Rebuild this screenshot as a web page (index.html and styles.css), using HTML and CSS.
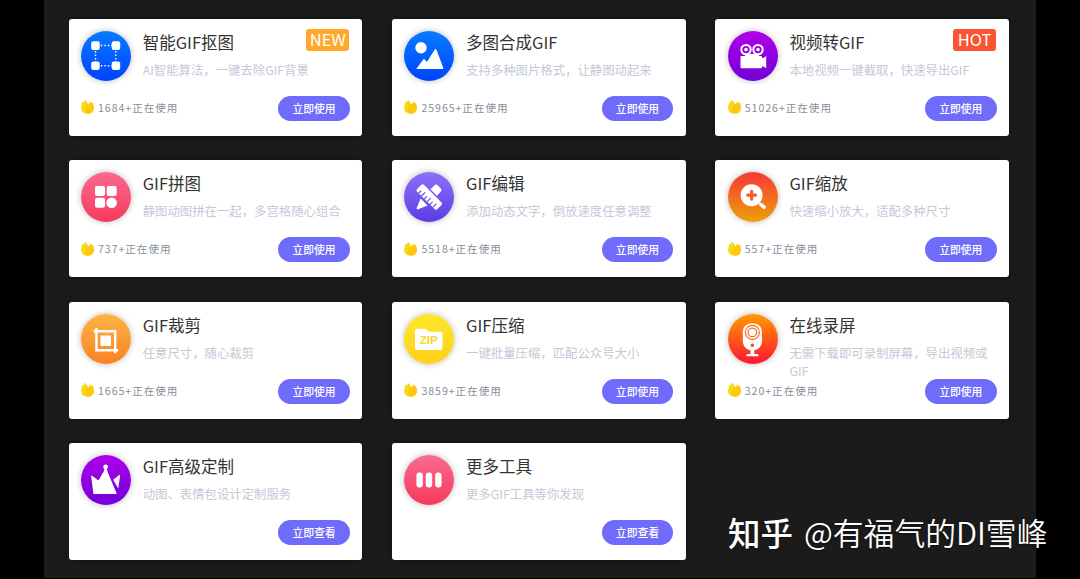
FILE: index.html
```html
<!DOCTYPE html>
<html lang="zh-CN">
<head>
  <meta charset="utf-8">
  <title>GIF工具</title>
  <meta name="viewport" content="width=device-width, initial-scale=1">
  <link rel="stylesheet" href="styles.css">
</head>
<body>
  <!-- Shared flame icon -->
  <svg class="defs">
    <symbol id="flame" viewBox="0 0 13 14">
      <path fill="#f8d916" d="M3.6 0C4.9 0.2 5.6 1.2 6.2 2.2L8 8L6.5 13.4C4.4 14 2.4 13.2 1.2 11.6C-0.2 9.6 -0.2 7 0.6 5C1.1 3.8 1 2.6 1.2 1.8C2 2 2.4 2.2 2.7 2.5C3.3 1.8 3.6 1 3.6 0Z"/>
      <path fill="#fdc80c" d="M9.4 1C9.6 1.8 10 2.4 10.6 3.2C11.2 3.2 11.6 3 12 2.6C12 4 12.8 5.4 13 7.2C13.2 9.6 12.4 11.4 10.8 12.8C8.8 14.3 6.2 14.2 4.6 12.4C3.4 10.8 3.4 8.8 4.4 7C5.2 5.8 5.4 4.6 5.2 3.4C6.2 3.4 6.8 3.8 7.2 4.4C8.2 3.6 9 2.4 9.4 1Z"/>
    </symbol>
  </svg>

  <div class="page">
    <div class="tools">
      <div class="card">
        <div class="head">
          <svg class="icon blue" viewBox="0 0 50 50">
            <g fill="none" stroke="#fff" stroke-width="1.4" stroke-dasharray="1.5 2"><path d="M19.8 14.5H31M19.8 34.7H31M14.5 20V31M34.7 20V31"/></g>
            <g fill="#fff"><rect x="10.2" y="10.2" width="8.5" height="8.7" rx="2"/><rect x="30.7" y="10.2" width="8.5" height="8.7" rx="2"/><rect x="10.2" y="30.4" width="8.5" height="8.7" rx="2"/><rect x="30.7" y="30.4" width="8.5" height="8.7" rx="2"/></g>
          </svg>
          <div class="info">
            <h3>智能GIF抠图</h3>
            <p>AI智能算法，一键去除GIF背景</p>
          </div>
        </div>
        <div class="foot">
          <span class="count"><svg><use href="#flame"/></svg>1684+正在使用</span>
          <a class="btn">立即使用</a>
        </div>
        <span class="badge new">NEW</span>
      </div>

      <div class="card">
        <div class="head">
          <svg class="icon blue" viewBox="0 0 50 50">
            <circle cx="17" cy="16.8" r="5.7" fill="#fff"/>
            <path fill="#fff" d="M12.2 38L19.4 28.3Q20.1 27.5 20.8 28.4L22.9 31L30.8 18.6Q31.7 17.4 32.5 18.7L39.3 37Q39.4 38 38.6 38Z"/>
          </svg>
          <div class="info">
            <h3>多图合成GIF</h3>
            <p>支持多种图片格式，让静图动起来</p>
          </div>
        </div>
        <div class="foot">
          <span class="count"><svg><use href="#flame"/></svg>25965+正在使用</span>
          <a class="btn">立即使用</a>
        </div>
      </div>

      <div class="card">
        <div class="head">
          <svg class="icon purple" viewBox="0 0 50 50">
            <g fill="none" stroke="#fff" stroke-width="2"><circle cx="18" cy="18.6" r="4.7"/><circle cx="30" cy="18.6" r="4.7"/><path d="M17 24H31"/></g>
            <g fill="#fff"><circle cx="18" cy="18.6" r="1.8"/><circle cx="30" cy="18.6" r="1.8"/><rect x="12.5" y="25" width="21.5" height="12.2" rx="1"/><path d="M33 27L35.5 27L38.2 25V37.2L35.5 35.4H33Z"/></g>
          </svg>
          <div class="info">
            <h3>视频转GIF</h3>
            <p>本地视频一键截取，快速导出GIF</p>
          </div>
        </div>
        <div class="foot">
          <span class="count"><svg><use href="#flame"/></svg>51026+正在使用</span>
          <a class="btn">立即使用</a>
        </div>
        <span class="badge hot">HOT</span>
      </div>

      <div class="card">
        <div class="head">
          <svg class="icon pink" viewBox="0 0 50 50">
            <g fill="#fff"><rect x="14" y="14" width="10" height="10" rx="2"/><rect x="25.7" y="14" width="10" height="10" rx="2"/><rect x="14" y="25.7" width="10" height="10" rx="2"/><circle cx="30.6" cy="30.7" r="5.3"/></g>
          </svg>
          <div class="info">
            <h3>GIF拼图</h3>
            <p>静图动图拼在一起，多宫格随心组合</p>
          </div>
        </div>
        <div class="foot">
          <span class="count"><svg><use href="#flame"/></svg>737+正在使用</span>
          <a class="btn">立即使用</a>
        </div>
      </div>

      <div class="card">
        <div class="head">
          <svg class="icon violet" viewBox="0 0 50 50">
            <g transform="rotate(45 25 25)">
              <rect x="11" y="20" width="28.5" height="9.6" rx="1.8" fill="#fff"/>
              <path fill="none" stroke="#7153ee" stroke-width="1.2" d="M15 30V26M19 30V24.5M23 30V26M27 30V24.5M31 30V26M35 30V24.5"/>
              <path fill="#fff" d="M20.6 18.5V13Q20.6 10.7 22.8 10.7H27.4Q29.6 10.7 29.6 13V18.5ZM20 32H30L26 41.4Q25 43 24 41.4Z"/>
            </g>
          </svg>
          <div class="info">
            <h3>GIF编辑</h3>
            <p>添加动态文字，倒放速度任意调整</p>
          </div>
        </div>
        <div class="foot">
          <span class="count"><svg><use href="#flame"/></svg>5518+正在使用</span>
          <a class="btn">立即使用</a>
        </div>
      </div>

      <div class="card">
        <div class="head">
          <svg class="icon fire" viewBox="0 0 50 50">
            <circle cx="23.6" cy="23.2" r="11" fill="#fff"/>
            <path fill="none" stroke="#f2602c" stroke-width="3.2" stroke-linecap="round" d="M19.7 23.2H27.5M23.6 19.3V27.1"/>
            <path fill="none" stroke="#fff" stroke-width="3.6" stroke-linecap="round" d="M32.8 32.3L36 35.2"/>
          </svg>
          <div class="info">
            <h3>GIF缩放</h3>
            <p>快速缩小放大，适配多种尺寸</p>
          </div>
        </div>
        <div class="foot">
          <span class="count"><svg><use href="#flame"/></svg>557+正在使用</span>
          <a class="btn">立即使用</a>
        </div>
      </div>

      <div class="card">
        <div class="head">
          <svg class="icon orange" viewBox="0 0 50 50">
            <path fill="none" stroke="#fff" stroke-width="2.4" d="M15.4 14V36.2H37.2M12.6 17.3H34.2V39.2"/>
            <rect x="19.5" y="21.5" width="10.5" height="10.5" fill="#fff"/>
          </svg>
          <div class="info">
            <h3>GIF裁剪</h3>
            <p>任意尺寸，随心裁剪</p>
          </div>
        </div>
        <div class="foot">
          <span class="count"><svg><use href="#flame"/></svg>1665+正在使用</span>
          <a class="btn">立即使用</a>
        </div>
      </div>

      <div class="card">
        <div class="head">
          <svg class="icon yellow" viewBox="0 0 50 50">
            <path fill="#fff" d="M12.8 14.7H21.5L24.7 17.8H36.8Q38.5 17.8 38.5 19.5V34.2Q38.5 36 36.8 36H12.8Q11 36 11 34.2V16.4Q11 14.7 12.8 14.7Z"/>
            <text class="zip" x="24.8" y="30.4" text-anchor="middle" textLength="18" lengthAdjust="spacingAndGlyphs">ZIP</text>
          </svg>
          <div class="info">
            <h3>GIF压缩</h3>
            <p>一键批量压缩，匹配公众号大小</p>
          </div>
        </div>
        <div class="foot">
          <span class="count"><svg><use href="#flame"/></svg>3859+正在使用</span>
          <a class="btn">立即使用</a>
        </div>
      </div>

      <div class="card">
        <div class="head">
          <svg class="icon sunset" viewBox="0 0 50 50">
            <path fill="#fff" d="M24.4 9.3C30.5 9.3 34 13 34 18.5V26C34 31.5 31.5 35.3 26.3 36.3V40H29.5Q30.6 40.2 30.6 42.3H18.2Q18.2 40.2 19.3 40H22.5V36.3C17.2 35.3 14.8 31.5 14.8 26V18.5C14.8 13 18.3 9.3 24.4 9.3Z"/>
            <g fill="none" stroke="#fb6a1c"><circle cx="24.4" cy="18.4" r="7" stroke-width="1.2"/><circle cx="24.4" cy="18.4" r="4.3" stroke-width="1.3"/></g>
            <circle cx="24.4" cy="31.3" r="1.7" fill="#fb4a20"/>
          </svg>
          <div class="info">
            <h3>在线录屏</h3>
            <p>无需下载即可录制屏幕，导出视频或GIF</p>
          </div>
        </div>
        <div class="foot">
          <span class="count"><svg><use href="#flame"/></svg>320+正在使用</span>
          <a class="btn">立即使用</a>
        </div>
      </div>

      <div class="card">
        <div class="head">
          <svg class="icon purple" viewBox="0 0 50 50">
            <g fill="#fff"><circle cx="24.6" cy="12" r="2.4"/><path d="M10.2 21.2Q10.3 20.3 11 20.8L17.4 25.6L23 16L23.6 13.5H25.8L26.6 17L35.6 38.2Q35.8 39 35 39H13.2Q12.4 39 12.3 38.2Z"/><path d="M32.2 24.8L38.2 20Q39.2 19.7 39.1 20.8L37.2 33.5Z"/></g>
          </svg>
          <div class="info">
            <h3>GIF高级定制</h3>
            <p>动图、表情包设计定制服务</p>
          </div>
        </div>
        <div class="foot">
          <a class="btn">立即查看</a>
        </div>
      </div>

      <div class="card">
        <div class="head">
          <svg class="icon pink" viewBox="0 0 50 50">
            <g fill="#fff"><rect x="12.4" y="17.4" width="6.4" height="15.2" rx="3"/><rect x="21.8" y="17.4" width="6.4" height="15.2" rx="3"/><rect x="31.2" y="17.4" width="6.4" height="15.2" rx="3"/></g>
          </svg>
          <div class="info">
            <h3>更多工具</h3>
            <p>更多GIF工具等你发现</p>
          </div>
        </div>
        <div class="foot">
          <a class="btn">立即查看</a>
        </div>
      </div>
    </div>
  </div>

  <!-- Watermark -->
  <div class="watermark"><b>知乎</b><span>@有福气的DI雪峰</span></div>
</body>
</html>
```
FILE: styles.css
```css
* {
  box-sizing: border-box;
}

body {
  margin: 0;
  height: 579px;
  overflow: hidden;
  background: #000;
  font-family: "Noto Sans CJK SC", sans-serif;
}

.defs {
  display: none;
}

.page {
  width: 992px;
  height: 578px;
  margin: 0 auto;
  padding: 18.8px 27px 0 24.5px;
  background: #1b1b1b;
}

.tools {
  display: grid;
  grid-template-columns: repeat(3, 293.8px);
  grid-auto-rows: 117px;
  column-gap: 29.6px;
  row-gap: 24.4px;
}

/* Tool card */
.card {
  position: relative;
  padding: 12px 12.5px;
  background: #fff;
  border-radius: 3px;
  box-shadow: 0 0 8px rgba(0, 0, 0, 0.3);
}

.head {
  display: flex;
  gap: 11.7px;
  height: 65px;
}

.icon {
  flex: none;
  width: 50px;
  height: 50px;
  border-radius: 50%;
  box-shadow: 0 0 6px rgba(0, 0, 0, 0.28);
}

.blue { background: linear-gradient(#0a7bff, #0043ff); }
.purple { background: linear-gradient(#b000ea, #7300d8); }
.pink { background: linear-gradient(#fb6a90, #f43a5c); }
.violet { background: linear-gradient(#8f70f8, #5a3ce6); }
.fire { background: linear-gradient(#f83838, #eda006); }
.orange { background: linear-gradient(#fdb445, #f98222); }
.yellow { background: linear-gradient(#ffe62c, #ffd01a); }
.sunset { background: linear-gradient(#ff9a00, #fd1534); }

.zip {
  fill: #fbd51f;
  font: bold 10.5px "Liberation Sans", sans-serif;
}

.info {
  flex: 1;
}

.info h3 {
  margin: -1px 0 0;
  font-size: 16.5px;
  font-weight: 400;
  line-height: 24px;
  color: #333;
}

.info p {
  margin: 7px 0 0;
  font-size: 12.38px;
  line-height: 18px;
  color: #c3c9d7;
}

.foot {
  display: flex;
  align-items: center;
  height: 25px;
}

.count {
  display: flex;
  align-items: center;
  height: 23px;
  margin-bottom: 2px;
  font-size: 10.6px;
  letter-spacing: 0.95px;
  color: #868e99;
}

.count svg {
  width: 13px;
  height: 14px;
  margin-right: 4px;
}

.btn {
  width: 71.5px;
  height: 25px;
  margin-left: auto;
  border-radius: 13px;
  background: #6f6bfb;
  color: #fff;
  font-size: 10.8px;
  font-weight: 500;
  line-height: 24.5px;
  text-align: center;
}

/* Corner label */
.badge {
  position: absolute;
  top: 10px;
  right: 13px;
  width: 43px;
  height: 22px;
  border-radius: 3px;
  color: #fff;
  font-size: 16.5px;
  line-height: 21px;
  text-align: center;
}

.new { background: #ffa82a; }
.hot { background: #fb5430; }

.watermark {
  position: absolute;
  left: 728px;
  top: 507px;
  display: flex;
  align-items: center;
  height: 48px;
  color: #fff;
  white-space: nowrap;
  text-shadow: 0 1px 2px rgba(0, 0, 0, 0.5);
}

.watermark b {
  margin-right: 11px;
  font-size: 32.5px;
  font-weight: 500;
}

.watermark span {
  font-size: 30.8px;
  font-weight: 350;
}
```
